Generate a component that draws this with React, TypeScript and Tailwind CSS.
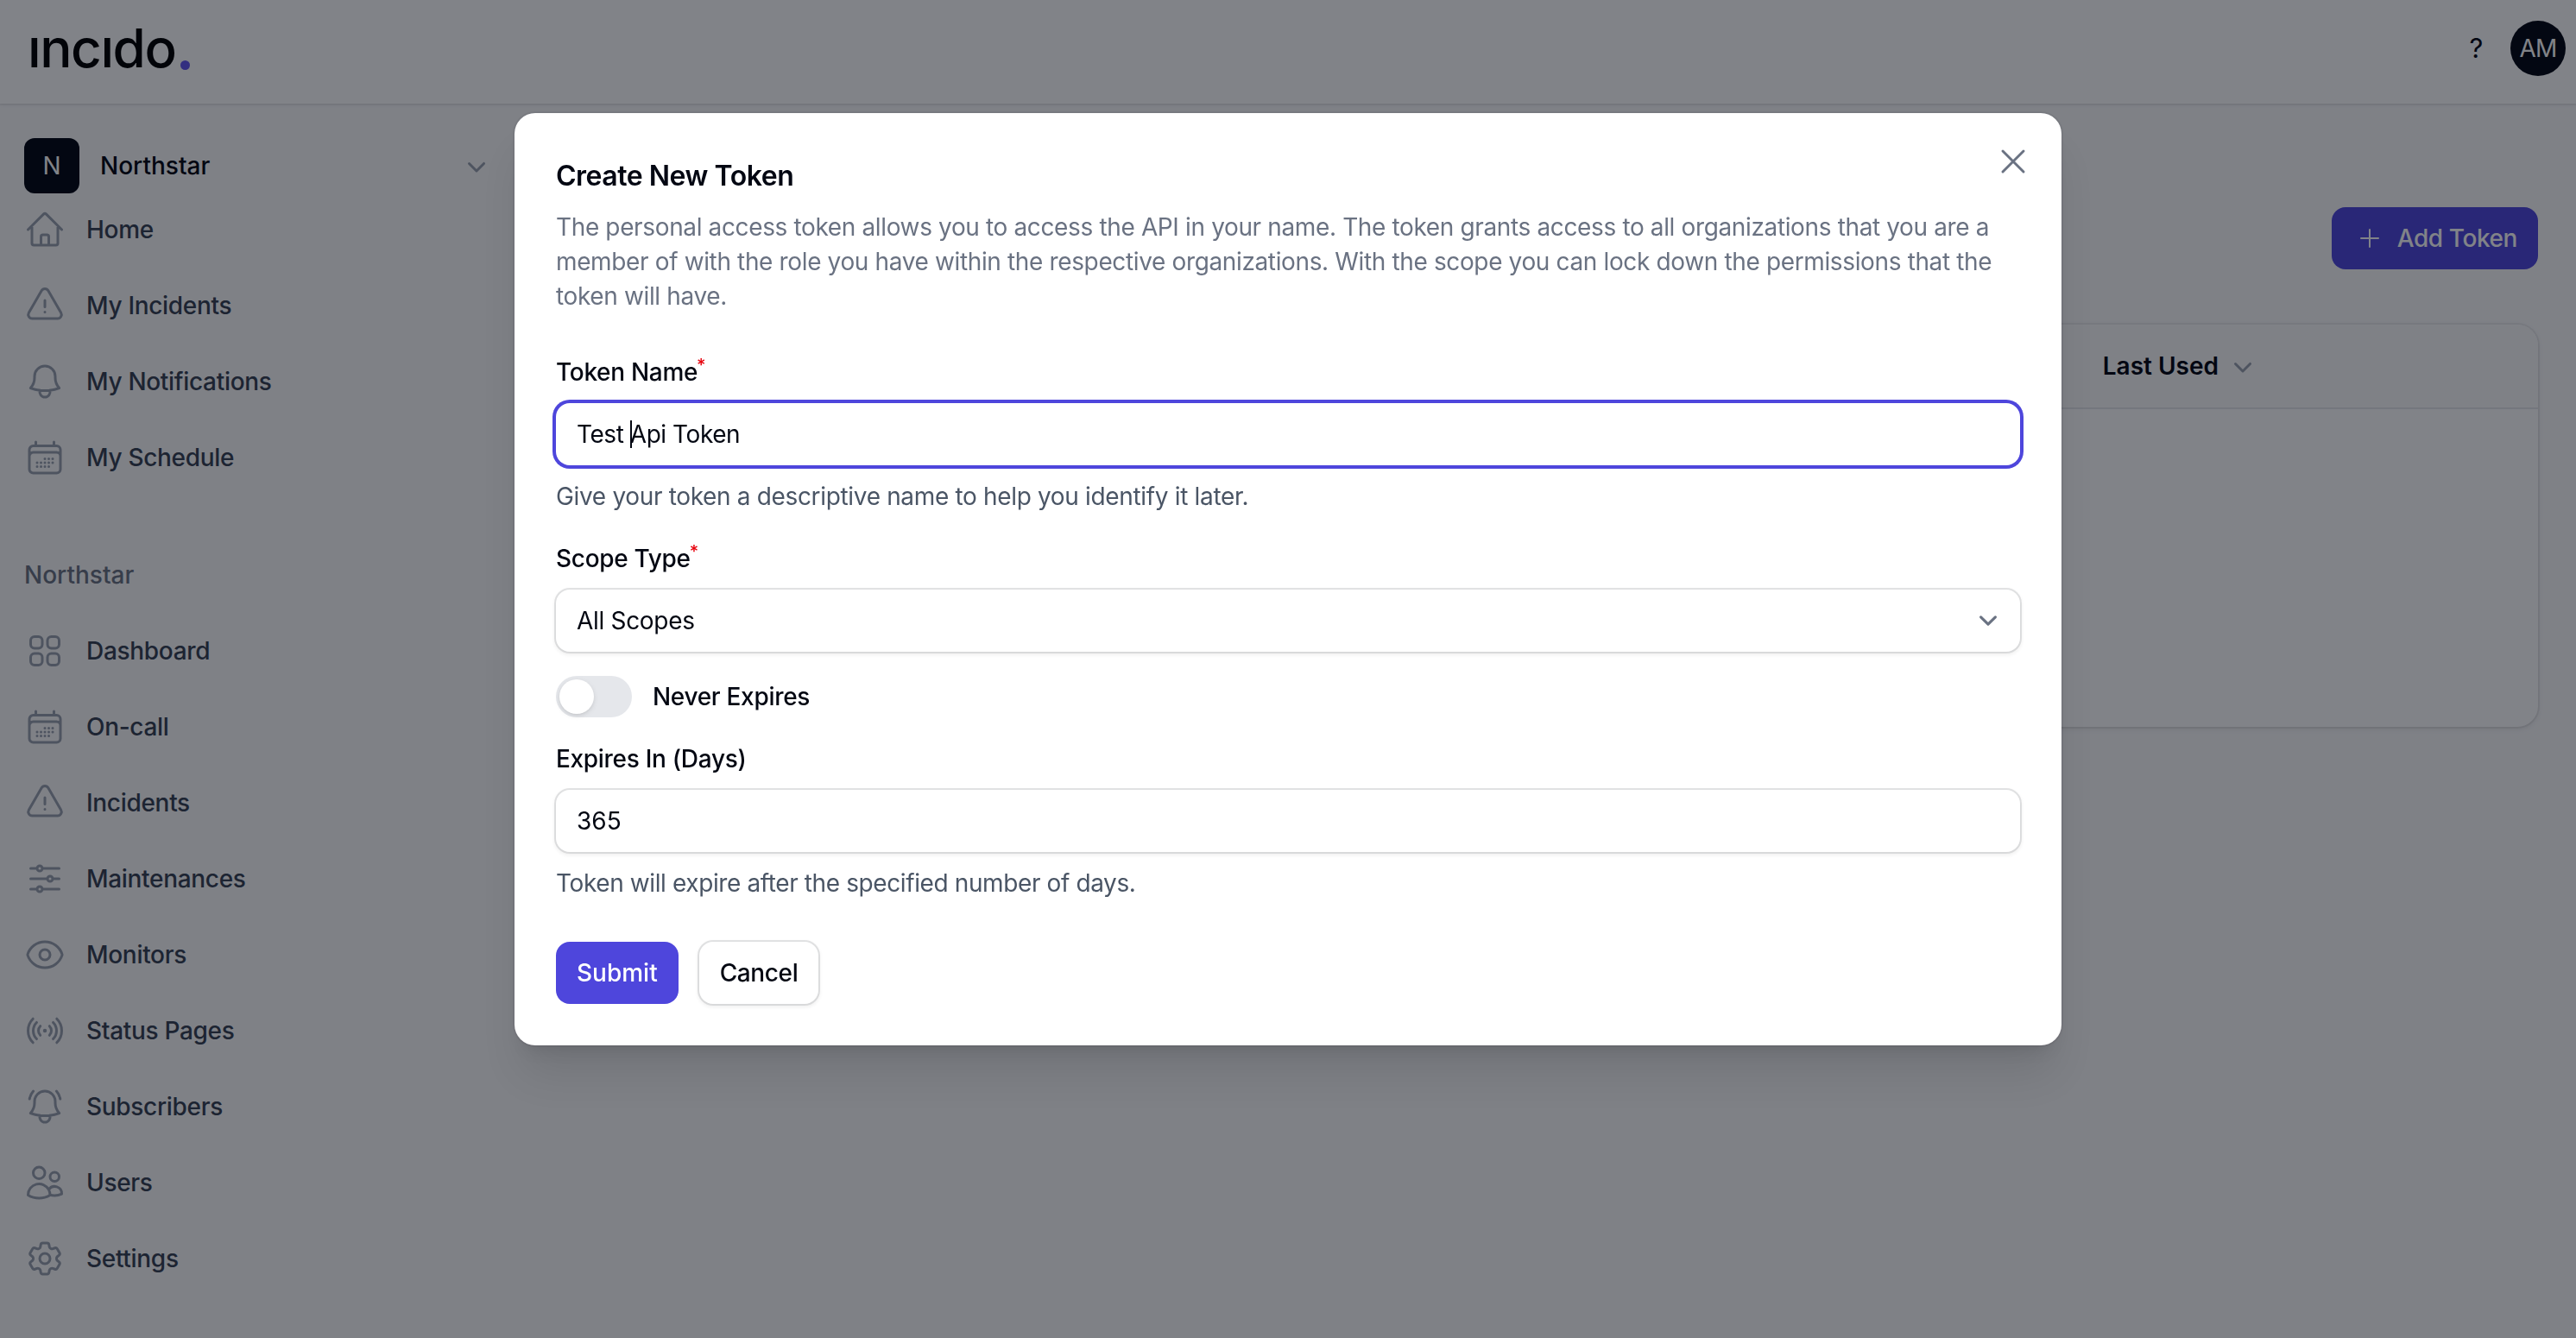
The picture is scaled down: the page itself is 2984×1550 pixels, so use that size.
import React, { useState } from "react";
import type { IconType } from "react-icons";
import {
  HiMiniChevronDown,
  HiOutlineAdjustmentsHorizontal,
  HiOutlineBell,
  HiOutlineBellAlert,
  HiOutlineCalendarDays,
  HiOutlineCog6Tooth,
  HiOutlineExclamationTriangle,
  HiOutlineEye,
  HiOutlineHome,
  HiOutlinePlus,
  HiOutlineSignal,
  HiOutlineSquares2X2,
  HiOutlineUsers,
  HiOutlineXMark,
} from "react-icons/hi2";

type NavItem = { label: string; icon: IconType };

const personalItems: NavItem[] = [
  { label: "Home", icon: HiOutlineHome },
  { label: "My Incidents", icon: HiOutlineExclamationTriangle },
  { label: "My Notifications", icon: HiOutlineBell },
  { label: "My Schedule", icon: HiOutlineCalendarDays },
];

const organizationItems: NavItem[] = [
  { label: "Dashboard", icon: HiOutlineSquares2X2 },
  { label: "On-call", icon: HiOutlineCalendarDays },
  { label: "Incidents", icon: HiOutlineExclamationTriangle },
  { label: "Maintenances", icon: HiOutlineAdjustmentsHorizontal },
  { label: "Monitors", icon: HiOutlineEye },
  { label: "Status Pages", icon: HiOutlineSignal },
  { label: "Subscribers", icon: HiOutlineBellAlert },
  { label: "Users", icon: HiOutlineUsers },
  { label: "Settings", icon: HiOutlineCog6Tooth },
];

function Topbar() {
  return (
    <header className="relative flex h-[120px] shrink-0 items-center justify-between bg-white pr-3 pb-2 pl-8 shadow-[0_0_0_2px_rgba(3,7,18,0.05),0_2px_4px_rgba(0,0,0,0.05)]">
      <div className="flex items-end gap-[5px]">
        <span className="text-[62px] leading-[62px] font-medium tracking-[-0.023em] text-black">
          ıncıdo
        </span>
        <span className="mb-1.5 size-[11px] rounded-full bg-[#6356ee]" />
      </div>
      <div className="flex items-center gap-8">
        <span className="text-[31px] leading-10 text-gray-950">?</span>
        <div className="flex size-16 items-center justify-center rounded-full bg-gray-950 tracking-[-0.03em] text-white">
          AM
        </div>
      </div>
    </header>
  );
}

function NavList({ items }: { items: NavItem[] }) {
  return (
    <ul className="flex flex-col gap-2">
      {items.map(({ label, icon: Icon }) => (
        <li
          key={label}
          className="flex h-20 items-center gap-6 font-medium text-gray-700"
        >
          <Icon className="size-12 text-gray-400" />
          {label}
        </li>
      ))}
    </ul>
  );
}

function Sidebar() {
  return (
    <aside className="w-[600px] shrink-0 px-7 pt-10">
      <button className="mb-0.5 flex w-full items-center font-medium tracking-normal text-gray-950">
        <span className="mr-6 flex size-16 items-center justify-center rounded-xl bg-gray-950 font-normal text-white">
          N
        </span>
        Northstar
        <HiMiniChevronDown className="ml-auto size-10 text-gray-400" />
      </button>
      <NavList items={personalItems} />
      <div className="mt-[76px] mb-7 leading-10 font-medium tracking-normal text-gray-500">
        Northstar
      </div>
      <NavList items={organizationItems} />
    </aside>
  );
}

function TokensPage() {
  return (
    <main className="flex-1 pt-[120px] pr-11 pl-10">
      <div className="flex justify-end">
        <button className="flex h-[72px] items-center gap-4 rounded-2xl bg-[#4e46dc] pr-6 pl-7 font-medium tracking-[-0.015em] text-white">
          <HiOutlinePlus className="size-8" />
          Add Token
        </button>
      </div>
      <div className="mt-16 h-[466px] overflow-hidden rounded-3xl bg-white shadow-[0_0_0_2px_rgba(3,7,18,0.05),0_2px_6px_rgba(0,0,0,0.1)]">
        <div className="flex h-[98px] items-center justify-end border-b-2 border-gray-200 bg-[#fafafb] pr-[322px] font-semibold tracking-normal text-gray-950">
          Last Used
          <HiMiniChevronDown className="ml-2 size-10 text-gray-400" />
        </div>
      </div>
    </main>
  );
}

function Label({
  children,
  required,
}: {
  children: React.ReactNode;
  required?: boolean;
}) {
  return (
    <label className="mb-4 flex h-10 items-start leading-10 font-medium text-gray-950">
      {children}
      {required && (
        <span className="-ml-px text-[20px] leading-6 font-medium text-red-600">
          *
        </span>
      )}
    </label>
  );
}

const fieldShadow =
  "shadow-[0_0_0_2px_rgba(3,7,18,0.1),0_2px_4px_2px_rgba(0,0,0,0.06)]";

function CreateTokenModal({ onClose }: { onClose: () => void }) {
  const [neverExpires, setNeverExpires] = useState(false);

  return (
    <div className="fixed inset-0 flex items-start justify-center bg-gray-950/50 pt-[131px]">
      <div className="relative w-[1792px] rounded-3xl bg-white p-12 shadow-[0_0_0_2px_rgba(3,7,18,0.05),0_40px_50px_-10px_rgba(0,0,0,0.1),0_16px_20px_-12px_rgba(0,0,0,0.1)]">
        <button
          className="absolute top-8 right-8 text-gray-500"
          onClick={onClose}
        >
          <HiOutlineXMark className="size-12" />
        </button>

        <h2 className="pt-px text-[32px] leading-12 font-semibold tracking-[-0.015em] text-gray-950">
          Create New Token
        </h2>
        <p className="mt-[15px] tracking-[-0.013em] text-gray-500">
          The personal access token allows you to access the API in your name.
          The token grants access to all organizations that you are a member of
          with the role you have within the respective organizations. With the
          scope you can lock down the permissions that the token will have.
        </p>

        <form className="mt-12 flex flex-col gap-8">
          <div>
            <Label required>Token Name</Label>
            <div className="flex h-[72px] items-center rounded-2xl bg-white px-6 tracking-[-0.016em] text-gray-950 shadow-[0_0_0_4px_#4e46dc]">
              <span className="whitespace-pre">Test </span>
              {/* Text cursor */}
              <span className="-mr-0.5 h-8 w-0.5 bg-gray-950" />
              <span>Api Token</span>
            </div>
            <p className="mt-4 tracking-[-0.012em] text-gray-600">
              Give your token a descriptive name to help you identify it later.
            </p>
          </div>

          <div>
            <Label required>Scope Type</Label>
            <div
              className={`flex h-[72px] items-center justify-between rounded-2xl bg-white pr-4 pl-6 text-gray-950 ${fieldShadow}`}
            >
              All Scopes
              <svg
                viewBox="0 0 20 20"
                fill="none"
                stroke="currentColor"
                strokeWidth={1.5}
                strokeLinecap="round"
                strokeLinejoin="round"
                className="size-[42px] text-gray-500"
              >
                <path d="m6 8 4 4 4-4" />
              </svg>
            </div>
          </div>

          <div className="flex h-10 items-center gap-6">
            <button
              type="button"
              role="switch"
              aria-checked={neverExpires}
              onClick={() => setNeverExpires(!neverExpires)}
              className={`flex h-12 w-[88px] items-center rounded-full px-1 ${
                neverExpires ? "justify-end bg-[#4e46dc]" : "bg-gray-200"
              }`}
            >
              <span className="size-10 rounded-full bg-white shadow-[0_2px_6px_rgba(0,0,0,0.1),0_2px_4px_-2px_rgba(0,0,0,0.1)]" />
            </button>
            <span className="font-medium text-gray-950">Never Expires</span>
          </div>

          <div>
            <Label>Expires In (Days)</Label>
            <div
              className={`flex h-[72px] items-center rounded-2xl bg-white px-6 tracking-normal text-gray-950 ${fieldShadow}`}
            >
              365
            </div>
            <p className="mt-4 tracking-[-0.014em] text-gray-600">
              Token will expire after the specified number of days.
            </p>
          </div>

          <div className="mt-4 flex gap-6">
            <button
              type="submit"
              className="h-[72px] rounded-2xl bg-[#4e46dc] px-6 font-medium tracking-normal text-white"
            >
              Submit
            </button>
            <button
              type="button"
              onClick={onClose}
              className={`h-[72px] rounded-2xl bg-white px-6 font-medium tracking-[-0.014em] text-gray-950 ${fieldShadow}`}
            >
              Cancel
            </button>
          </div>
        </form>
      </div>
    </div>
  );
}

export default function App() {
  const [modalOpen, setModalOpen] = useState(true);

  return (
    <div className="flex h-screen flex-col overflow-hidden bg-[#fafafb] font-[Inter,sans-serif] text-[28px] leading-10 tracking-[-0.011em] antialiased">
      <Topbar />
      <div className="flex flex-1">
        <Sidebar />
        <TokensPage />
      </div>
      {modalOpen && <CreateTokenModal onClose={() => setModalOpen(false)} />}
    </div>
  );
}
